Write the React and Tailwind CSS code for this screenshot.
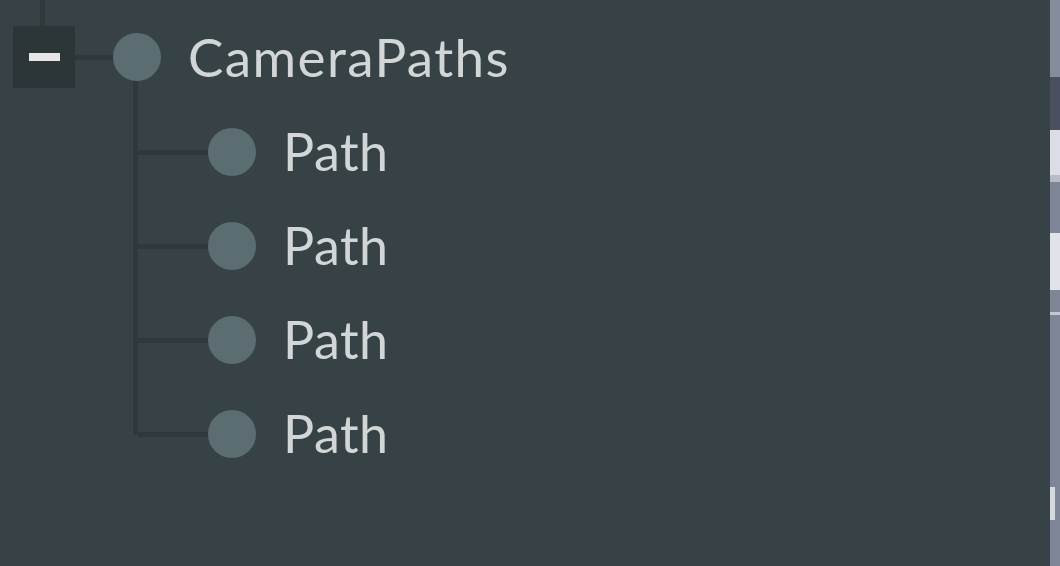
import React from "react";

const childNodes = ["Path", "Path", "Path", "Path"];

const Circle = () => (
  <div className="w-[48px] h-[48px] rounded-full bg-[#5b6d70] shrink-0" />
);

const App = () => {
  return (
    <div
      className="w-[1060px] h-[566px] flex bg-[#364246] overflow-hidden"
      style={{ fontFamily: "Lato, 'Open Sans', sans-serif" }}
    >
      {/* tree panel */}
      <div className="flex-1 flex flex-col">
        <div className="ml-[40px] w-[5px] h-[26px] bg-[#2f393c]" />

        {/* root node */}
        <div className="flex items-center h-[62px] pl-[13px]">
          <div className="w-[62px] h-[62px] bg-[#2c3639] flex items-center justify-center shrink-0">
            <div className="w-[31px] h-[8px] bg-[#e6e6e6]" />
          </div>
          <div className="w-[38px] h-[5px] bg-[#2f393c]" />
          <Circle />
          <span className="ml-[27px] text-[53px] leading-none tracking-[1.4px] text-[#d2d6d6] -mt-[2px]">
            CameraPaths
          </span>
        </div>

        {/* children */}
        <div className="flex ml-[133px] -mt-[7px]">
          <div className="w-[5px] h-[354px] bg-[#2f393c]" />
          <div className="flex flex-col pt-[24px]">
            {childNodes.map((label, i) => (
              <div key={i} className="flex items-center h-[94px]">
                <div className="w-[70px] h-[5px] bg-[#2f393c]" />
                <Circle />
                <span className="ml-[27px] text-[52px] leading-none tracking-[0.5px] text-[#d2d6d6] -mt-[2px]">
                  {label}
                </span>
              </div>
            ))}
          </div>
        </div>
      </div>

      {/* viewport edge on the right */}
      <div className="w-[10px] flex flex-col bg-[#7d8596]">
        <div className="h-[77px] bg-[#858c9b]" />
        <div className="h-[53px] bg-[#4a5060]" />
        <div className="h-[45px] bg-[#dcdce6]" />
        <div className="h-[7px] bg-[#b9bcc8]" />
        <div className="h-[51px]" />
        <div className="h-[57px] bg-[#e2e2ea]" />
        <div className="h-[22px]" />
        <div className="h-[3px] bg-[#c4c7d2]" />
        <div className="h-[172px]" />
        <div className="h-[33px] w-[5px] bg-[#d8d8e0]" />
      </div>
    </div>
  );
};

export default App;
